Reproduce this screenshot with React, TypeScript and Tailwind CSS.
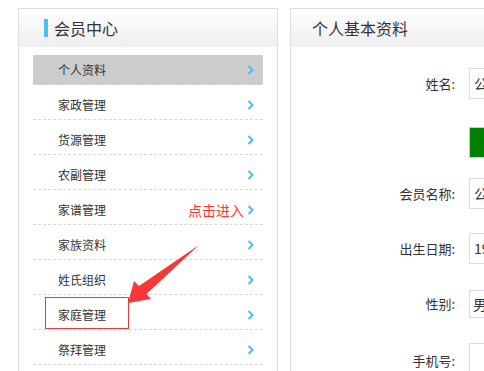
import React from "react";

const items = ["个人资料", "家政管理", "货源管理", "农副管理", "家谱管理", "家族资料", "姓氏组织", "家庭管理", "祭拜管理"];

function Chevron() {
  return (
    <svg width="7" height="10" viewBox="0 0 7 10" className="shrink-0">
      <polyline points="1.5,1 5.5,5 1.5,9" fill="none" stroke="#4cbff0" strokeWidth="2" />
    </svg>
  );
}

export default function App() {
  const font = { fontFamily: '"Noto Sans CJK SC", "Noto Sans", sans-serif' };
  return (
    <div className="relative w-[484px] h-[371px] overflow-hidden bg-white text-[#333]" style={font}>
      <div className="flex gap-[12px] pl-[18px] pt-[8px]">
        {/* Left panel */}
        <div className="w-[260px] h-[420px] shrink-0 border border-[#dddddd]">
          <div className="h-[38px] flex items-center pl-[25px] bg-gradient-to-b from-white to-[#eeeeee]">
            <span className="w-[4px] h-[18px] bg-[#4cbff0]"></span>
            <span className="ml-[6px] text-[16px] leading-none">会员中心</span>
          </div>
          <ul className="mx-[14px] pt-[3px]">
            {items.map((t, i) => (
              <li
                key={t}
                className={
                  "mt-[5px] h-[30px] flex items-center pl-[25px] pr-[9px] border-b border-dashed border-[#d8d8d8] text-[12px] " +
                  (i === 0 ? "bg-[#cccccc]" : "")
                }
              >
                <span>{t}</span>
                <span className="ml-auto flex items-center">
                  {i === 4 && <span className="text-[14px] text-[#ff3333] mr-[3px] leading-none">点击进入</span>}
                  <Chevron />
                </span>
              </li>
            ))}
          </ul>
        </div>

        {/* Right panel */}
        <div className="w-[320px] h-[420px] shrink-0 border border-[#dddddd]">
          <div className="h-[38px] flex items-center pl-[21px] bg-gradient-to-b from-white to-[#eeeeee]">
            <span className="text-[16px] leading-none">个人基本资料</span>
          </div>
          <div className="pt-[21px] text-[13px]">
            <div className="flex items-center h-[31px]">
              <div className="w-[164px] text-right">姓名:</div>
              <div className="ml-[14px] h-[31px] w-[120px] border border-[#dddddd] flex items-center pl-[4px] text-[14px]">公</div>
            </div>
            <div className="flex items-center h-[31px] mt-[28px]">
              <div className="w-[164px]"></div>
              <div className="ml-[14px] h-[31px] w-[120px] bg-[#008000] border border-[#cccccc]"></div>
            </div>
            <div className="flex items-center h-[31px] mt-[20px]">
              <div className="w-[164px] text-right">会员名称:</div>
              <div className="ml-[14px] h-[31px] w-[120px] border border-[#dddddd] flex items-center pl-[4px] text-[14px]">公</div>
            </div>
            <div className="flex items-center h-[31px] mt-[24px]">
              <div className="w-[164px] text-right">出生日期:</div>
              <div className="ml-[14px] h-[31px] w-[120px] border border-[#dddddd] flex items-center pl-[4px] text-[14px]">19</div>
            </div>
            <div className="flex items-center h-[28px] mt-[26px]">
              <div className="w-[164px] text-right">性别:</div>
              <div className="ml-[14px] h-[28px] w-[120px] border border-[#dddddd] flex items-center pl-[3px] text-[14px]">男</div>
            </div>
            <div className="flex items-center h-[31px] mt-[25px]">
              <div className="w-[164px] text-right pt-[4px]">手机号:</div>
              <div className="ml-[14px] h-[31px] w-[120px] border border-[#dddddd]"></div>
            </div>
          </div>
        </div>
      </div>

      {/* Annotation overlays */}
      <div className="absolute left-[45px] top-[297px] w-[84px] h-[32px] border border-[#e23c3c]"></div>
      <svg className="absolute left-0 top-0 pointer-events-none" width="484" height="371">
        <polygon points="199,245 146.5,294 151,299 128,303 134,281 139,286" fill="#f83838" />
      </svg>
    </div>
  );
}
